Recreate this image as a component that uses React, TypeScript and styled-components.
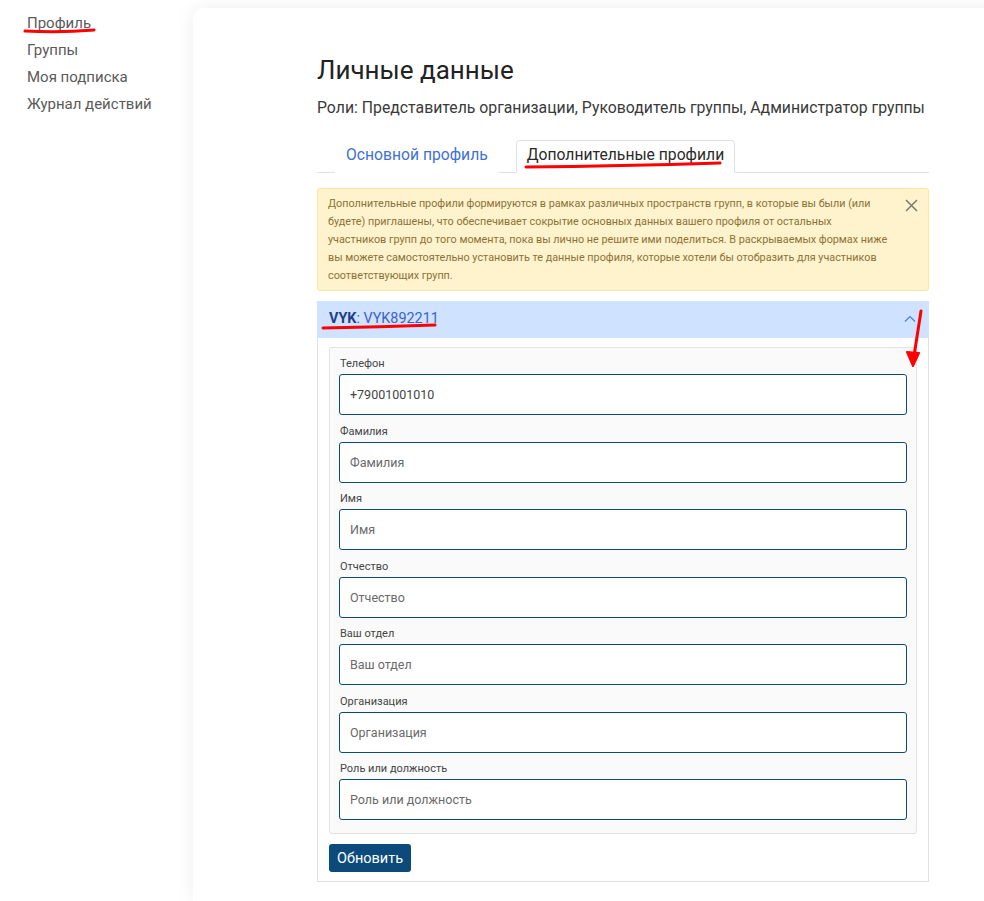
import React from 'react'
import styled, { createGlobalStyle } from 'styled-components'

const GlobalStyle = createGlobalStyle`
  html, body {
    margin: 0;
    padding: 0;
    background: #ffffff;
    font-family: Roboto, "Noto Sans", sans-serif;
  }
  * {
    box-sizing: border-box;
  }
`

const fields = [
  { label: 'Телефон', value: '+79001001010' },
  { label: 'Фамилия', value: '' },
  { label: 'Имя', value: '' },
  { label: 'Отчество', value: '' },
  { label: 'Ваш отдел', value: '' },
  { label: 'Организация', value: '' },
  { label: 'Роль или должность', value: '' },
]

const App = () => {
  return (
    <Page>
      <GlobalStyle />
      <Sidebar>
        <SideLink $active>Профиль</SideLink>
        <SideLink>Группы</SideLink>
        <SideLink>Моя подписка</SideLink>
        <SideLink>Журнал действий</SideLink>
      </Sidebar>
      <Card>
        <Content>
          <Title>Личные данные</Title>
          <Roles>
            Роли: Представитель организации, Руководитель группы, Администратор группы
          </Roles>
          <Tabs>
            <Tab>Основной профиль</Tab>
            <Tab $active>Дополнительные профили</Tab>
          </Tabs>
          <Alert>
            <AlertText>
              Дополнительные профили формируются в рамках различных пространств групп, в
              которые вы были (или будете) приглашены, что обеспечивает сокрытие основных
              данных вашего профиля от остальных участников групп до того момента, пока вы
              лично не решите ими поделиться. В раскрываемых формах ниже вы можете
              самостоятельно установить те данные профиля, которые хотели бы отобразить для
              участников соответствующих групп.
            </AlertText>
            <CloseButton aria-label="Закрыть">
              <svg width="13" height="13" viewBox="0 0 13 13">
                <path d="M1 1L12 12M12 1L1 12" stroke="#7a7a6e" strokeWidth="1.5" />
              </svg>
            </CloseButton>
          </Alert>
          <Accordion>
            <AccordionHeader>
              <HeaderTitle>
                <b>VYK</b>: VYK892211
              </HeaderTitle>
              <svg width="12" height="8" viewBox="0 0 12 8">
                <path d="M1 6.5L6 1.5L11 6.5" fill="none" stroke="#4d7fd8" strokeWidth="1.2" />
              </svg>
            </AccordionHeader>
            <AccordionBody>
              <FormPanel>
                {fields.map((f) => (
                  <Field key={f.label}>
                    <Label>{f.label}</Label>
                    <Input defaultValue={f.value} placeholder={f.label} />
                  </Field>
                ))}
              </FormPanel>
              <SubmitButton>Обновить</SubmitButton>
            </AccordionBody>
          </Accordion>
        </Content>
      </Card>
      <Annotations width="984" height="901" viewBox="0 0 984 901">
        <path d="M25 31 Q60 33 94 30" stroke="#f00" strokeWidth="3" fill="none" strokeLinecap="round" />
        <path d="M526 167 Q620 166 720 163" stroke="#f00" strokeWidth="3" fill="none" strokeLinecap="round" />
        <path d="M323 328 Q380 327 435 325" stroke="#f00" strokeWidth="3" fill="none" strokeLinecap="round" />
        <path d="M921 311 L914 356" stroke="#f00" strokeWidth="3" fill="none" strokeLinecap="round" />
        <path d="M907 352 L913 366 L919 353 Z" fill="#f00" stroke="#f00" strokeWidth="2" strokeLinejoin="round" />
      </Annotations>
    </Page>
  )
}

const Page = styled.div`
  position: relative;
  display: flex;
  width: 984px;
  height: 901px;
  overflow: hidden;
`

const Sidebar = styled.nav`
  width: 193px;
  flex-shrink: 0;
  display: flex;
  flex-direction: column;
  padding: 10px 0 0 27px;
`

const SideLink = styled.a<{ $active?: boolean }>`
  font-size: 15px;
  line-height: 27px;
  color: #5a5a5a;
  cursor: pointer;
  text-decoration: none;
`

const Card = styled.main`
  flex: 1;
  margin-top: 8px;
  margin-right: -20px;
  background: #ffffff;
  border-top-left-radius: 10px;
  box-shadow: 0 0 18px rgba(0, 0, 0, 0.07);
  padding: 44px 0 0 124px;
`

const Content = styled.div`
  width: 612px;
  display: flex;
  flex-direction: column;
`

const Title = styled.h1`
  margin: 0;
  font-size: 26px;
  font-weight: 400;
  line-height: 36px;
  color: #222222;
`

const Roles = styled.p`
  margin: 9px 0 0;
  font-size: 15.8px;
  line-height: 22px;
  color: #3a3a3a;
  white-space: nowrap;
`

const Tabs = styled.div`
  display: flex;
  gap: 17px;
  margin-top: 21px;
  padding-left: 18px;
  border-bottom: 1px solid #dee2e6;
`

const Tab = styled.button<{ $active?: boolean }>`
  height: 33px;
  margin-bottom: -1px;
  padding: 0 10px 4px;
  font-family: inherit;
  font-size: 15.7px;
  color: ${(p) => (p.$active ? '#2a2a2a' : '#4170d6')};
  background: #ffffff;
  border: 1px solid ${(p) => (p.$active ? '#dee2e6' : 'transparent')};
  border-bottom-color: ${(p) => (p.$active ? '#ffffff' : 'transparent')};
  border-radius: 4px 4px 0 0;
  cursor: pointer;
`

const Alert = styled.div`
  margin-top: 15px;
  display: flex;
  align-items: flex-start;
  padding: 6px 10px 5px 10px;
  background: #fff3cd;
  border: 1px solid #ffe69c;
  border-radius: 3px;
`

const AlertText = styled.p`
  flex: 1;
  margin: 0;
  padding-right: 16px;
  font-size: 10.8px;
  line-height: 18px;
  color: #8a7236;
`

const CloseButton = styled.button`
  margin-top: 4px;
  padding: 0;
  border: none;
  background: none;
  cursor: pointer;
  display: flex;
`

const Accordion = styled.section`
  margin-top: 10px;
`

const AccordionHeader = styled.div`
  height: 37px;
  display: flex;
  align-items: center;
  justify-content: space-between;
  padding: 0 13px 2px 12px;
  background: #cfe2ff;
`

const HeaderTitle = styled.span`
  font-size: 14.4px;
  color: #3c62c8;
  b {
    color: #1d3f8f;
    font-weight: 700;
  }
`

const AccordionBody = styled.div`
  border: 1px solid #dee2e6;
  border-top: none;
  padding: 9px 11px 9px 11px;
  display: flex;
  flex-direction: column;
  align-items: flex-start;
`

const FormPanel = styled.div`
  align-self: stretch;
  display: flex;
  flex-direction: column;
  gap: 9.5px;
  padding: 9px 9px 13px;
  background: #fafafa;
  border: 1px solid #e3e3e3;
  border-radius: 3px;
`

const Field = styled.label`
  display: flex;
  flex-direction: column;
  gap: 3px;
`

const Label = styled.span`
  padding-left: 1px;
  font-size: 11px;
  line-height: 14px;
  color: #454545;
`

const Input = styled.input`
  height: 41px;
  padding: 0 10px;
  font-family: inherit;
  font-size: 12.5px;
  color: #444444;
  background: #ffffff;
  border: 1px solid #0c4a7c;
  border-radius: 3px;
  outline: none;
  &::placeholder {
    color: #6a6a6a;
  }
`

const SubmitButton = styled.button`
  margin-top: 10px;
  height: 28px;
  padding: 0 8px;
  font-family: inherit;
  font-size: 14.5px;
  color: #ffffff;
  background: #0c4a7c;
  border: none;
  border-radius: 3px;
  cursor: pointer;
`

const Annotations = styled.svg`
  position: absolute;
  top: 0;
  left: 0;
  pointer-events: none;
`

export default App
